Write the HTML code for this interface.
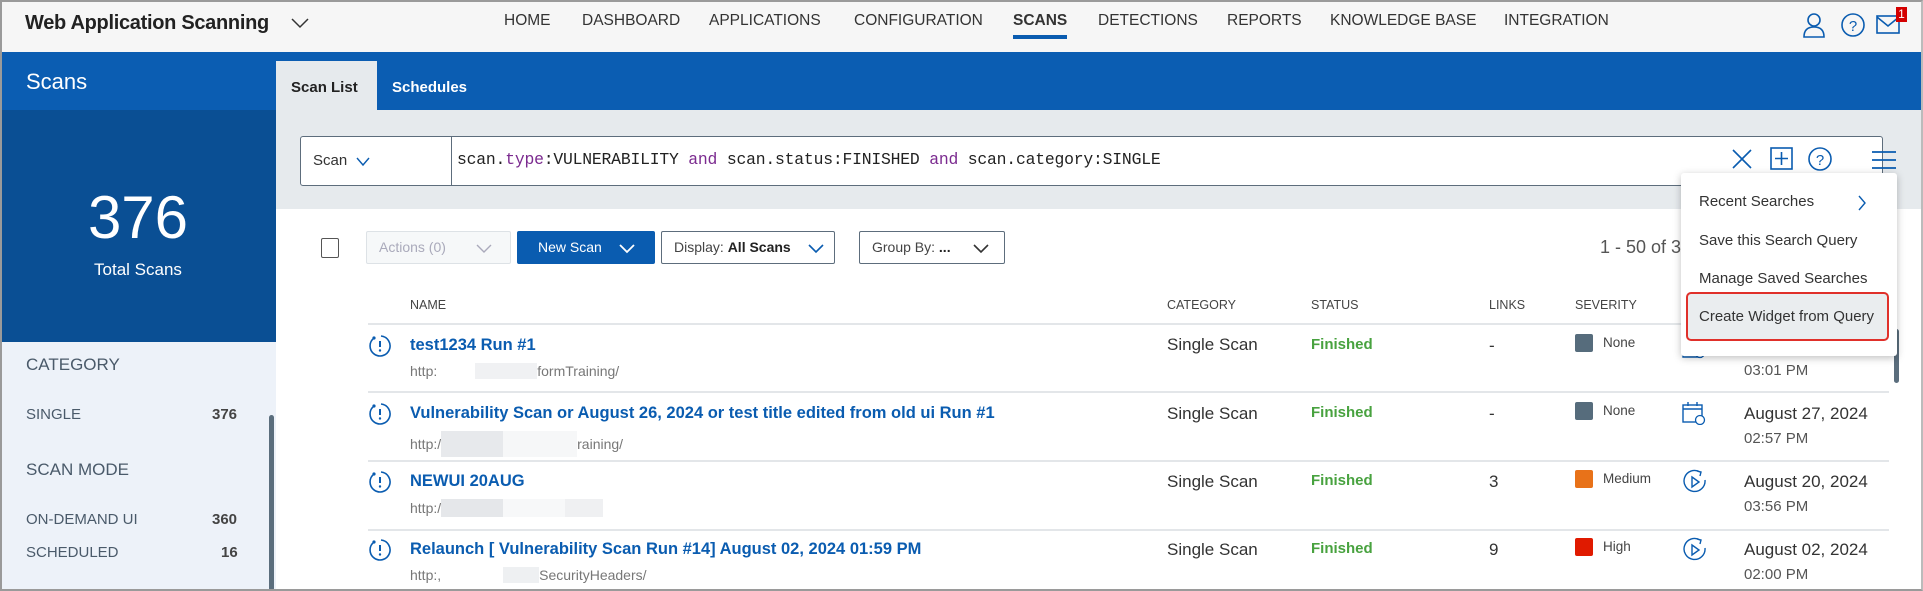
<!DOCTYPE html>
<html><head><meta charset="utf-8"><style>
*{margin:0;padding:0;box-sizing:border-box}
body{width:1923px;height:591px;overflow:hidden;font-family:"Liberation Sans",sans-serif;background:#fff;position:relative;color:#333}
.a{position:absolute;white-space:nowrap}
.frame{position:absolute;left:0;top:0;width:1923px;height:591px;border:2px solid #9a9a9a;border-right-color:#bbb;pointer-events:none;z-index:50}
.nav{font-size:15.5px;color:#333;top:12px}
.side{font-size:15px;color:#4a5a6a}
.hd{font-size:12.5px;color:#444;top:298px}
.ttl{font-size:16.5px;color:#0a5cb0;font-weight:bold}
.url{font-size:14px;color:#777}
.cat{font-size:17px;color:#333}
.fin{font-size:15px;color:#48a23f;font-weight:bold}
.dt{font-size:17px;color:#333}
.tm{font-size:15px;color:#555}
.sev{width:18px;height:18px;border-radius:2px}
.line{position:absolute;left:368px;width:1521px;height:2px;background:#e3e6e9}
.btn{position:absolute;top:231px;height:33px;border:1px solid #5d6d7c;border-radius:2px;font-size:14px;line-height:31px;padding-left:12px;color:#444}
.mi{font-size:15px;color:#333;left:1699px}
</style></head><body>
<div class="frame"></div>
<div class="a" style="left:0;top:0;width:1923px;height:52px;background:#f6f6f6"></div>
<div class="a" style="left:25px;top:12px;font-size:20px;color:#222;font-weight:bold;letter-spacing:-0.3px">Web Application Scanning</div>
<svg class="a" style="left:290px;top:16px" width="20" height="14"><path d="M2 3 L10 11 L18 3" fill="none" stroke="#333" stroke-width="1.5"/></svg>
<div class="a nav" style="left:504px">HOME</div>
<div class="a nav" style="left:582px">DASHBOARD</div>
<div class="a nav" style="left:709px">APPLICATIONS</div>
<div class="a nav" style="left:854px">CONFIGURATION</div>
<div class="a nav" style="left:1013px;font-weight:bold">SCANS</div>
<div class="a" style="left:1013px;top:35px;width:54px;height:4px;background:#0a5cb0"></div>
<div class="a nav" style="left:1098px">DETECTIONS</div>
<div class="a nav" style="left:1227px">REPORTS</div>
<div class="a nav" style="left:1330px">KNOWLEDGE BASE</div>
<div class="a nav" style="left:1504px">INTEGRATION</div>
<svg class="a" style="left:1802px;top:12px" width="24" height="26"><circle cx="12" cy="8" r="6" fill="none" stroke="#0a5cb0" stroke-width="1.6"/><path d="M2 25 Q2 15 12 15 Q22 15 22 25 Z" fill="none" stroke="#0a5cb0" stroke-width="1.6"/></svg>
<svg class="a" style="left:1840px;top:12px" width="26" height="26"><circle cx="13" cy="13" r="11" fill="none" stroke="#0a5cb0" stroke-width="1.6"/><text x="13" y="19" font-size="15" text-anchor="middle" fill="#0a5cb0" font-family="Liberation Sans">?</text></svg>
<svg class="a" style="left:1876px;top:15px" width="26" height="20"><rect x="1" y="1" width="22" height="17" fill="none" stroke="#0a5cb0" stroke-width="1.6"/><path d="M1 2 L12 11 L23 2" fill="none" stroke="#0a5cb0" stroke-width="1.6"/></svg>
<div class="a" style="left:1896px;top:7px;width:11px;height:15px;background:#d40000;color:#fff;font-size:12px;text-align:center;line-height:15px">1</div>
<div class="a" style="left:0;top:52px;width:1923px;height:58px;background:#0b5db2"></div>
<div class="a" style="left:26px;top:69px;font-size:22px;color:#fff">Scans</div>
<div class="a" style="left:276px;top:61px;width:101px;height:49px;background:#e6eaed"></div>
<div class="a" style="left:291px;top:79px;font-size:15px;color:#222;font-weight:bold">Scan List</div>
<div class="a" style="left:392px;top:79px;font-size:15px;color:#fff;font-weight:bold">Schedules</div>
<div class="a" style="left:0;top:110px;width:276px;height:232px;background:#0a4f94"></div>
<div class="a" style="left:0;top:183px;width:276px;text-align:center;font-size:60px;color:#fff">376</div>
<div class="a" style="left:0;top:260px;width:276px;text-align:center;font-size:17px;color:#fff">Total Scans</div>
<div class="a" style="left:0;top:342px;width:276px;height:249px;background:#edf2f9"></div>
<div class="a" style="left:269px;top:415px;width:5px;height:176px;background:#5b6e7d;border-radius:3px"></div>
<div class="a side" style="left:26px;top:355px;font-size:17px">CATEGORY</div>
<div class="a side" style="left:26px;top:406px">SINGLE</div>
<div class="a side" style="left:212px;top:406px;font-weight:bold;color:#444">376</div>
<div class="a side" style="left:26px;top:460px;font-size:17px">SCAN MODE</div>
<div class="a side" style="left:26px;top:511px">ON-DEMAND UI</div>
<div class="a side" style="left:212px;top:511px;font-weight:bold;color:#444">360</div>
<div class="a side" style="left:26px;top:544px">SCHEDULED</div>
<div class="a side" style="left:221px;top:544px;font-weight:bold;color:#444">16</div>
<div class="a" style="left:276px;top:110px;width:1647px;height:99px;background:#e6eaed"></div>
<div class="a" style="left:300px;top:136px;width:1583px;height:50px;background:#fff;border:1px solid #5d6d7c;border-radius:3px"></div>
<div class="a" style="left:451px;top:137px;width:1px;height:48px;background:#5d6d7c"></div>
<div class="a" style="left:313px;top:152px;font-size:15px;color:#333">Scan</div>
<svg class="a" style="left:355px;top:156px" width="16" height="12"><path d="M2 2 L8 9 L14 2" fill="none" stroke="#0a5cb0" stroke-width="1.4"/></svg>
<div class="a" style="left:457px;top:150px;font-family:'Liberation Mono',monospace;font-size:16.4px;color:#222;letter-spacing:-0.2px">scan.<span style="color:#7b2a8f">type</span>:VULNERABILITY <span style="color:#7b2a8f">and</span> scan.status:FINISHED <span style="color:#7b2a8f">and</span> scan.category:SINGLE</div>
<svg class="a" style="left:1731px;top:148px" width="22" height="22"><path d="M2 2 L20 20 M20 2 L2 20" stroke="#0a5cb0" stroke-width="1.6"/></svg>
<svg class="a" style="left:1770px;top:147px" width="24" height="24"><rect x="1" y="1" width="21" height="21" fill="none" stroke="#0a5cb0" stroke-width="1.6"/><path d="M11.5 5 V18 M5 11.5 H18" stroke="#0a5cb0" stroke-width="1.6"/></svg>
<svg class="a" style="left:1807px;top:146px" width="26" height="26"><circle cx="13" cy="13" r="11" fill="none" stroke="#0a5cb0" stroke-width="1.6"/><text x="13" y="19" font-size="15" text-anchor="middle" fill="#0a5cb0" font-family="Liberation Sans">?</text></svg>
<svg class="a" style="left:1871px;top:150px" width="26" height="20"><path d="M1 2 H25 M1 10 H25 M1 18 H25" stroke="#0a5cb0" stroke-width="1.8"/></svg>
<div class="a" style="left:321px;top:238px;width:18px;height:20px;border:1.5px solid #555;border-radius:2px"></div>
<div class="btn" style="left:366px;width:145px;border-color:#dde2e6;background:#f6f8f9;color:#aab">Actions (0)<svg style="position:absolute;left:108px;top:11px" width="18" height="12"><path d="M2 2 L9 9 L16 2" fill="none" stroke="#aab" stroke-width="1.4"/></svg></div>
<div class="btn" style="left:517px;width:138px;border-color:#0a5cb0;background:#0a5cb0;color:#fff;padding-left:20px">New Scan<svg style="position:absolute;left:100px;top:11px" width="18" height="12"><path d="M2 2 L9 9 L16 2" fill="none" stroke="#fff" stroke-width="1.8"/></svg></div>
<div class="btn" style="left:661px;width:174px">Display: <b style="color:#222">All Scans</b><svg style="position:absolute;left:145px;top:11px" width="18" height="12"><path d="M2 2 L9 9 L16 2" fill="none" stroke="#0a5cb0" stroke-width="1.6"/></svg></div>
<div class="btn" style="left:859px;width:146px">Group By: <b style="color:#222">...</b><svg style="position:absolute;left:112px;top:11px" width="18" height="12"><path d="M2 2 L9 9 L16 2" fill="none" stroke="#333" stroke-width="1.6"/></svg></div>
<div class="a" style="left:1600px;top:237px;font-size:18px;color:#555">1 - 50 of 3</div>
<div class="a hd" style="left:410px">NAME</div>
<div class="a hd" style="left:1167px">CATEGORY</div>
<div class="a hd" style="left:1311px">STATUS</div>
<div class="a hd" style="left:1489px">LINKS</div>
<div class="a hd" style="left:1575px">SEVERITY</div>
<div class="line" style="top:323px"></div>
<div class="line" style="top:391px"></div>
<div class="line" style="top:460px"></div>
<div class="line" style="top:529px"></div>
<div class="a" style="left:1894px;top:329px;width:5px;height:54px;background:#5b6e7d;border-radius:3px"></div>
<svg width="0" height="0" style="position:absolute"><defs><g id="ri"><path d="M6 4 A10 10 0 1 0 13 2" fill="none" stroke="#0a5cb0" stroke-width="1.6"/><circle cx="6" cy="4" r="1.6" fill="#0a5cb0"/><path d="M12 7 V13" stroke="#0a5cb0" stroke-width="2"/><circle cx="12" cy="16.5" r="1.2" fill="#0a5cb0"/></g></defs></svg>

<svg class="a" style="left:368px;top:334px" width="24" height="24"><use href="#ri"/></svg>
<div class="a ttl" style="left:410px;top:336px">test1234 Run #1</div>
<div class="a url" style="left:410px;top:363px">http:<span style="display:inline-block;width:62px;height:16px;background:#f0f1f3;margin:0 0 -3px 38px"></span>formTraining/</div>
<div class="a cat" style="left:1167px;top:335px">Single Scan</div>
<div class="a fin" style="left:1311px;top:336px">Finished</div>
<div class="a cat" style="left:1489px;top:336px">-</div>
<div class="a sev" style="left:1575px;top:334px;background:#566c7c"></div>
<div class="a" style="left:1603px;top:335px;font-size:13.5px;color:#444">None</div>

<svg class="a" style="left:368px;top:402px" width="24" height="24"><use href="#ri"/></svg>
<div class="a ttl" style="left:410px;top:404px">Vulnerability Scan or August 26, 2024 or test title edited from old ui Run #1</div>
<div class="a url" style="left:410px;top:431px">http:/<span style="display:inline-block;width:62px;height:26px;background:#e7e9ec;margin-bottom:-8px"></span><span style="display:inline-block;width:74px;height:26px;background:#f6f7f8;margin-bottom:-8px"></span>raining/</div>
<div class="a cat" style="left:1167px;top:404px">Single Scan</div>
<div class="a fin" style="left:1311px;top:404px">Finished</div>
<div class="a cat" style="left:1489px;top:404px">-</div>
<div class="a sev" style="left:1575px;top:402px;background:#566c7c"></div>
<div class="a" style="left:1603px;top:403px;font-size:13.5px;color:#444">None</div>
<svg class="a" style="left:1682px;top:401px" width="24" height="24"><rect x="1" y="4" width="19" height="17" fill="none" stroke="#0a5cb0" stroke-width="1.4"/><path d="M1 8 H20 M6 1 V5 M15 1 V5" stroke="#0a5cb0" stroke-width="1.4"/><circle cx="18" cy="19" r="4.5" fill="#fff" stroke="#0a5cb0" stroke-width="1.3"/></svg>
<div class="a dt" style="left:1744px;top:404px">August 27, 2024</div>
<div class="a tm" style="left:1744px;top:430px">02:57 PM</div>

<svg class="a" style="left:368px;top:470px" width="24" height="24"><use href="#ri"/></svg>
<div class="a ttl" style="left:410px;top:472px">NEWUI 20AUG</div>
<div class="a url" style="left:410px;top:499px">http:/<span style="display:inline-block;width:62px;height:18px;background:#e5e7ea;margin-bottom:-4px"></span><span style="display:inline-block;width:62px;height:18px;background:#f7f8f9;margin-bottom:-4px"></span><span style="display:inline-block;width:38px;height:18px;background:#eff0f2;margin-bottom:-4px"></span></div>
<div class="a cat" style="left:1167px;top:472px">Single Scan</div>
<div class="a fin" style="left:1311px;top:472px">Finished</div>
<div class="a cat" style="left:1489px;top:472px">3</div>
<div class="a sev" style="left:1575px;top:470px;background:#e87219"></div>
<div class="a" style="left:1603px;top:471px;font-size:13.5px;color:#444">Medium</div>
<svg class="a" style="left:1682px;top:469px" width="26" height="26"><path d="M18 3 A10.5 10.5 0 1 0 23 11" fill="none" stroke="#0a5cb0" stroke-width="1.4"/><path d="M15 2 L19 3 L18 7" fill="none" stroke="#0a5cb0" stroke-width="1.4"/><path d="M10 8 L17 13 L10 18 Z" fill="none" stroke="#0a5cb0" stroke-width="1.4"/></svg>
<div class="a dt" style="left:1744px;top:472px">August 20, 2024</div>
<div class="a tm" style="left:1744px;top:498px">03:56 PM</div>

<svg class="a" style="left:368px;top:538px" width="24" height="24"><use href="#ri"/></svg>
<div class="a ttl" style="left:410px;top:540px">Relaunch [ Vulnerability Scan Run #14] August 02, 2024 01:59 PM</div>
<div class="a url" style="left:410px;top:567px">http:,<span style="display:inline-block;width:36px;height:16px;background:#eef0f2;margin:0 0 -3px 62px"></span>SecurityHeaders/</div>
<div class="a cat" style="left:1167px;top:540px">Single Scan</div>
<div class="a fin" style="left:1311px;top:540px">Finished</div>
<div class="a cat" style="left:1489px;top:540px">9</div>
<div class="a sev" style="left:1575px;top:538px;background:#e01a00"></div>
<div class="a" style="left:1603px;top:539px;font-size:13.5px;color:#444">High</div>
<svg class="a" style="left:1682px;top:537px" width="26" height="26"><path d="M18 3 A10.5 10.5 0 1 0 23 11" fill="none" stroke="#0a5cb0" stroke-width="1.4"/><path d="M15 2 L19 3 L18 7" fill="none" stroke="#0a5cb0" stroke-width="1.4"/><path d="M10 8 L17 13 L10 18 Z" fill="none" stroke="#0a5cb0" stroke-width="1.4"/></svg>
<div class="a dt" style="left:1744px;top:540px">August 02, 2024</div>
<div class="a tm" style="left:1744px;top:566px">02:00 PM</div>

<svg class="a" style="left:1682px;top:339px" width="24" height="20"><path d="M1 2 V18 H20" fill="none" stroke="#0a5cb0" stroke-width="1.4"/><circle cx="18" cy="14" r="4.5" fill="#fff" stroke="#0a5cb0" stroke-width="1.3"/></svg>
<div class="a dt" style="left:1744px;top:337px">August 28, 2024</div>
<div class="a tm" style="left:1744px;top:362px">03:01 PM</div>

<div class="a" style="left:1681px;top:173px;width:216px;height:183px;background:#fff;border-radius:3px;box-shadow:0 2px 8px rgba(0,0,0,0.25);z-index:10">
<div class="a mi" style="left:18px;top:20px">Recent Searches</div>
<svg class="a" style="left:176px;top:21px" width="10" height="18"><path d="M2 2 L8 9 L2 16" fill="none" stroke="#0a5cb0" stroke-width="1.4"/></svg>
<div class="a mi" style="left:18px;top:59px">Save this Search Query</div>
<div class="a mi" style="left:18px;top:97px">Manage Saved Searches</div>
<div class="a" style="left:5px;top:119px;width:203px;height:49px;background:#eaedef;border:2.5px solid #e0302a;border-radius:5px"></div>
<div class="a mi" style="left:18px;top:135px">Create Widget from Query</div>
</div>
</body></html>
